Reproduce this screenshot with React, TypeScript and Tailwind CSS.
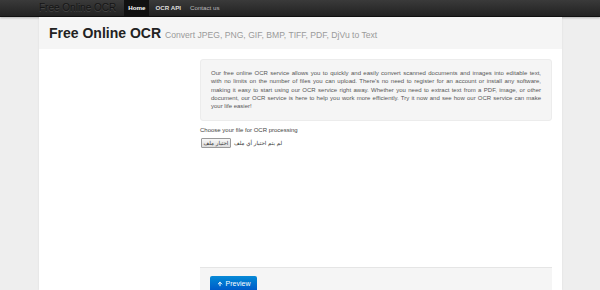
import { ArrowUp } from "lucide-react";

const lines = [
  "Our free online OCR service allows you to quickly and easily convert scanned documents and images into editable text,",
  "with no limits on the number of files you can upload. There's no need to register for an account or install any software,",
  "making it easy to start using our OCR service right away. Whether you need to extract text from a PDF, image, or other",
  "document, our OCR service is here to help you work more efficiently. Try it now and see how our OCR service can make",
];

export default function App() {
  return (
    <div className="min-h-screen bg-[#eeeeee] font-['Liberation_Sans',Arial,sans-serif]">
      <nav className="h-[17px] bg-gradient-to-b from-[#3a3a3a] to-[#222222] border-b border-[#111111] shadow-[0_1px_2px_rgba(0,0,0,0.25)]">
        <div className="w-[523px] ml-[39px] h-full flex items-stretch">
          <a href="#" className="flex items-center text-[10px] text-[#161616] leading-none pr-[8px] [text-shadow:0_1px_0_#444]">
            Free Online OCR
          </a>
          <ul className="flex items-stretch text-[6.2px] leading-none">
            <li className="flex items-center px-[4px] bg-[#111111] text-white font-bold">Home</li>
            <li className="flex items-center px-[5px] ml-[1px] text-[#dddddd] font-bold">OCR API</li>
            <li className="flex items-center px-[4px] text-[#bbbbbb]">Contact us</li>
          </ul>
        </div>
      </nav>

      <div className="w-[523px] ml-[39px] shadow-[0_0_2px_rgba(0,0,0,0.08)]">
        <div className="h-[32px] bg-[#f5f5f5] px-[10px] flex items-end pb-[9px] gap-[4px]">
          <h1 className="text-[14px] font-bold text-[#222222] leading-none">Free Online OCR</h1>
          <span className="text-[8.6px] text-[#9a9a9a] leading-none">
            Convert JPEG, PNG, GIF, BMP, TIFF, PDF, DjVu to Text
          </span>
        </div>

        <div className="bg-white flex min-h-[241px]">
          <div className="w-[161px]" />
          <div className="w-[352px] pt-[10px] flex flex-col">
            <div className="bg-[#f5f5f5] border border-[#ececec] rounded-[3px] px-[10px] pt-[9px] pb-[10px] text-[6px] leading-[8.3px] text-[#555555]">
              {lines.map((l) => (
                <div key={l} className="text-justify [text-align-last:justify] whitespace-nowrap">
                  {l}
                </div>
              ))}
              <div>your life easier!</div>
            </div>

            <label className="mt-[5px] text-[6px] leading-[8px] text-[#444444]">
              Choose your file for OCR processing
            </label>
            <div className="mt-[4px] flex items-center gap-[3px] font-['DejaVu_Sans',sans-serif] text-[5.5px] text-[#333333]">
              <span className="w-[30px] h-[10px] ml-[1px] flex items-center justify-center border border-[#9a9a9a] rounded-[1px] bg-gradient-to-b from-[#f8f8f8] to-[#dddddd]">
                اختيار ملف
              </span>
              <span dir="rtl">لم يتم اختيار أي ملف</span>
            </div>

            <div className="mt-auto h-[23px] bg-[#f5f5f5] border-t border-[#e5e5e5] px-[10px] pt-[8px]">
              <button className="h-[15px] w-[47px] flex items-center justify-center gap-[3px] rounded-t-[2px] bg-gradient-to-b from-[#0a8ad6] to-[#0057c8] text-white text-[7px] leading-none">
                <ArrowUp className="w-[6px] h-[6px]" strokeWidth={4} />
                Preview
              </button>
            </div>
          </div>
        </div>
      </div>
    </div>
  );
}
